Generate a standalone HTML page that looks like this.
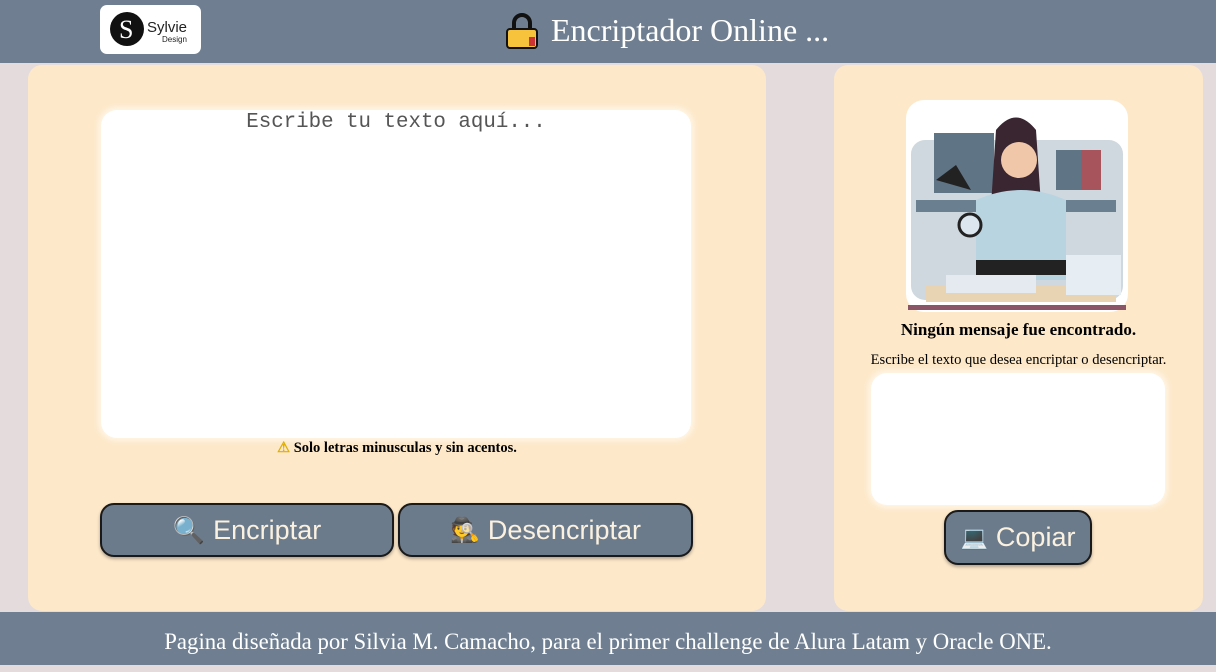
<!DOCTYPE html>
<html><head><meta charset="utf-8"><style>
*{margin:0;padding:0;box-sizing:border-box}
html,body{width:1216px;height:665px}
body{background:#e4dcdc;position:relative;overflow:hidden;font-family:"Liberation Serif",serif}
.hdr{position:absolute;left:0;top:0;width:1216px;height:63px;background:#6f7f91}
.logo{position:absolute;left:100px;top:5px;width:101px;height:49px;background:#fff;border-radius:7px}
.title{position:absolute;left:551px;top:12px;color:#fff;font-size:32px}
.p1{position:absolute;left:28px;top:65px;width:738px;height:546px;background:#fde8c9;border-radius:14px}
.p2{position:absolute;left:834px;top:65px;width:369px;height:546px;background:#fde8c9;border-radius:14px}
.ta{position:absolute;background:#fff;border-radius:16px;box-shadow:0 0 6px 3px #fff6e6}
.btn{position:absolute;height:54px;background:#6c7b8b;border:2px solid #1a1a1a;border-radius:14px;color:#fbf1e0;font-family:"Liberation Sans",sans-serif;font-size:27px;display:flex;align-items:center;justify-content:center;gap:8px;box-shadow:0 2px 3px rgba(0,0,0,.3)}
.ftr{position:absolute;left:0;top:612px;width:1216px;height:53px;background:#6f7f91;color:#fff;font-size:22.8px;text-align:center;line-height:60px;white-space:nowrap}
</style></head><body>
<div class="hdr">
<div class="logo">
<svg width="101" height="49"><circle cx="27" cy="24" r="17" fill="#111"/><text x="19" y="33" font-size="26" fill="#fff" font-family="Liberation Serif">S</text><text x="47" y="27" font-size="15" fill="#222" font-family="Liberation Sans">Sylvie</text><text x="62" y="37" font-size="8" fill="#222" font-family="Liberation Sans">Design</text></svg>
</div>
<svg style="position:absolute;left:504px;top:12px" width="36" height="38"><path d="M10 18 V11 a8 8 0 0 1 16 0 V18" fill="none" stroke="#111" stroke-width="4"/><rect x="3" y="17" width="30" height="19" rx="3" fill="#f7c33c" stroke="#111" stroke-width="2"/><rect x="25" y="25" width="6" height="9" fill="#c33"/></svg>
<div class="title">Encriptador Online ...</div>
</div>
<div class="p1">
<div class="ta" style="left:73px;top:45px;width:590px;height:328px"></div>
<div style="position:absolute;left:73px;top:46px;width:590px;text-align:center;font-family:'Liberation Mono',monospace;font-size:20.8px;color:#555">Escribe tu texto aquí...</div>
<div style="position:absolute;left:0;top:375px;width:738px;text-align:center;font-size:14.5px;font-weight:bold"><span style="color:#e0b000">⚠</span> Solo letras minusculas y sin acentos.</div>
<div class="btn" style="left:72px;top:438px;width:294px"><span style="font-size:26px">🔍</span>Encriptar</div>
<div class="btn" style="left:370px;top:438px;width:295px"><span style="font-size:24px">🕵</span>Desencriptar</div>
</div>
<div class="p2">
<svg style="position:absolute;left:72px;top:35px" width="222" height="212"><rect width="222" height="212" rx="18" fill="#fff"/><rect x="5" y="40" width="212" height="160" rx="14" fill="#cfd8de"/><rect x="28" y="33" width="60" height="60" fill="#5f7484"/><rect x="150" y="50" width="45" height="40" fill="#5f7484"/><rect x="175" y="50" width="20" height="40" fill="#a8545d"/><rect x="10" y="100" width="200" height="12" fill="#6a7f8f"/><path d="M90 30 q20-25 40 0 l10 150 h-60z" fill="#3a2630"/><circle cx="113" cy="60" r="18" fill="#f0c7a8"/><path d="M70 100 q45-20 90 0 v80 h-90z" fill="#b9d4e1"/><rect x="70" y="160" width="90" height="15" fill="#222"/><rect x="20" y="185" width="190" height="17" fill="#e8d4b2"/><rect x="40" y="175" width="90" height="18" fill="#e4eaf0"/><rect x="160" y="155" width="55" height="40" fill="#e6eef3"/><path d="M30 80 l20-15 15 25z" fill="#222"/><circle cx="64" cy="125" r="11" fill="#dbe6ee" stroke="#222" stroke-width="3"/><rect x="2" y="205" width="218" height="5" fill="#8a5566"/></svg>
<div style="position:absolute;left:0;top:255px;width:369px;text-align:center;font-size:17px;font-weight:bold">Ningún mensaje fue encontrado.</div>
<div style="position:absolute;left:0;top:287px;width:369px;text-align:center;font-size:14.6px;white-space:nowrap">Escribe el texto que desea encriptar o desencriptar.</div>
<div class="ta" style="left:37px;top:308px;width:294px;height:132px"></div>
<div class="btn" style="left:110px;top:445px;width:148px;height:55px"><span style="font-size:22px">💻</span>Copiar</div>
</div>
<div class="ftr">Pagina diseñada por Silvia M. Camacho, para el primer challenge de Alura Latam y Oracle ONE.</div>
</body></html>
